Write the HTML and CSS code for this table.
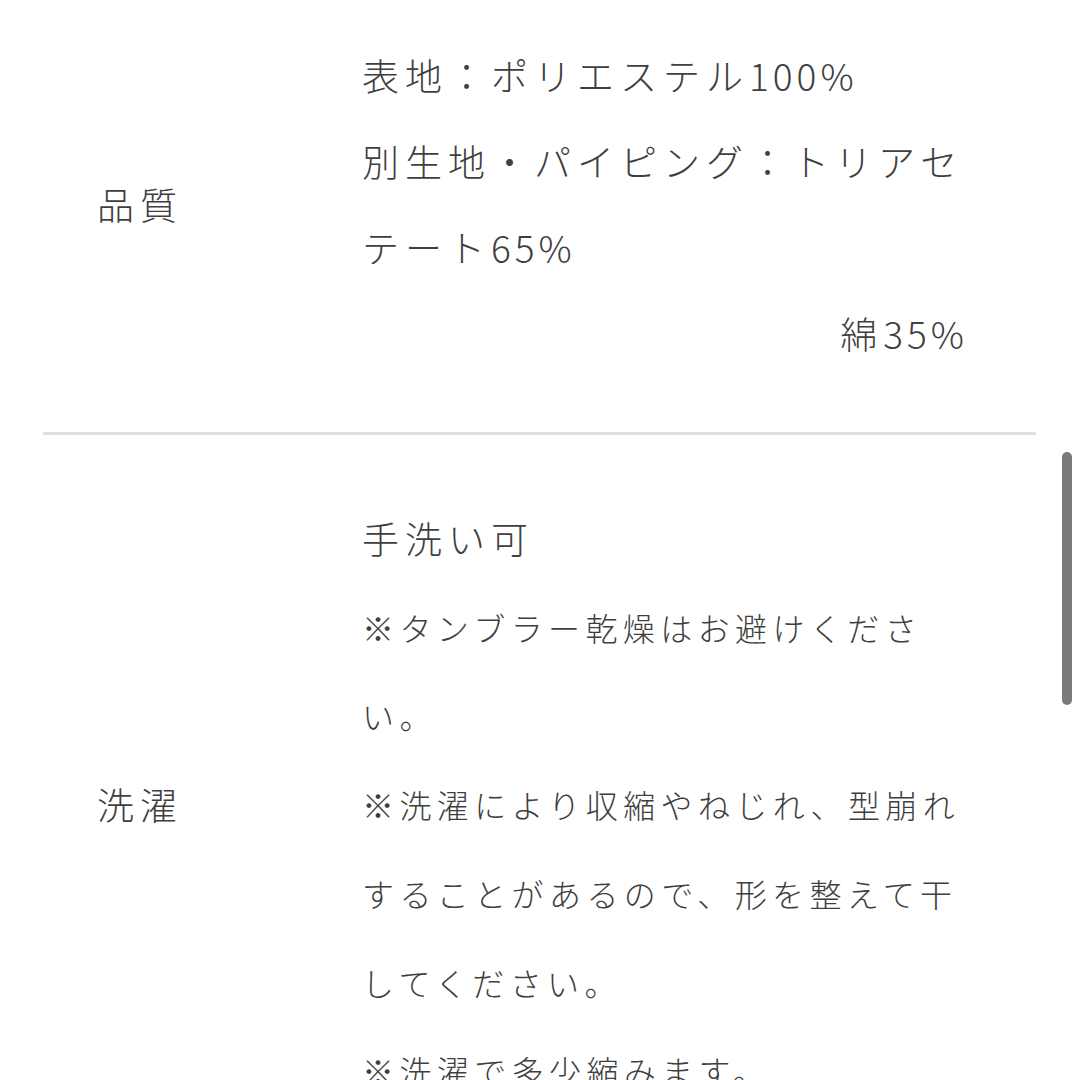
FILE: index.html
```html
<!DOCTYPE html>
<html lang="ja">
<head>
<meta charset="utf-8">
<title>商品詳細</title>
<link rel="stylesheet" href="styles.css">
</head>
<body>
<div class="spec">
  <div class="row row-quality">
    <div class="label">品質</div>
    <div class="value">
      <p class="big">表地：ポリエステル<span class="num">100%</span><br>別生地・パイピング：トリアセ<br>テート<span class="num">65%</span></p>
      <p class="big right">綿<span class="num">35%</span></p>
    </div>
  </div>
  <div class="row row-wash">
    <div class="label">洗濯</div>
    <div class="value">
      <p class="big">手洗い可</p>
      <p class="small">※タンブラー乾燥はお避けくださ<br>い。<br>※洗濯により収縮やねじれ、型崩れ<br>することがあるので、形を整えて干<br>してください。<br>※洗濯で多少縮みます。</p>
    </div>
  </div>
</div>
<div class="scrollbar"></div>
</body>
</html>
```
FILE: styles.css
```css
html, body {
  margin: 0;
  padding: 0;
  background: #ffffff;
  overflow: hidden;
}
body {
  font-family: "Noto Sans CJK JP", "Noto Sans", sans-serif;
  font-weight: 300;
  color: #3f3f3f;
  height: 1080px;
  position: relative;
}
.spec {
  margin-left: 43px;
  width: 993px;
}
.row {
  display: grid;
  grid-template-columns: 319px 606px;
  align-items: center;
}
.row-quality {
  padding-top: 32px;
  padding-bottom: 56px;
  border-bottom: 3px solid #e0e0e0;
}
.row-wash {
  padding-top: 59px;
}
.label {
  padding-left: 54px;
  font-size: 37px;
  letter-spacing: 6px;
  line-height: 50px;
}
.value p {
  margin: 0;
  white-space: nowrap;
}
.big {
  font-size: 37px;
  letter-spacing: 6px;
  line-height: 86px;
}
.num {
  letter-spacing: 4px;
}
.row-wash .big {
  line-height: 88.7px;
}
.small {
  font-size: 32px;
  letter-spacing: 5.4px;
  line-height: 88.7px;
}
.right {
  text-align: right;
}
.scrollbar {
  position: absolute;
  left: 1062px;
  top: 452px;
  width: 10px;
  height: 253px;
  border-radius: 5px;
  background: #7a7a7a;
}
```
